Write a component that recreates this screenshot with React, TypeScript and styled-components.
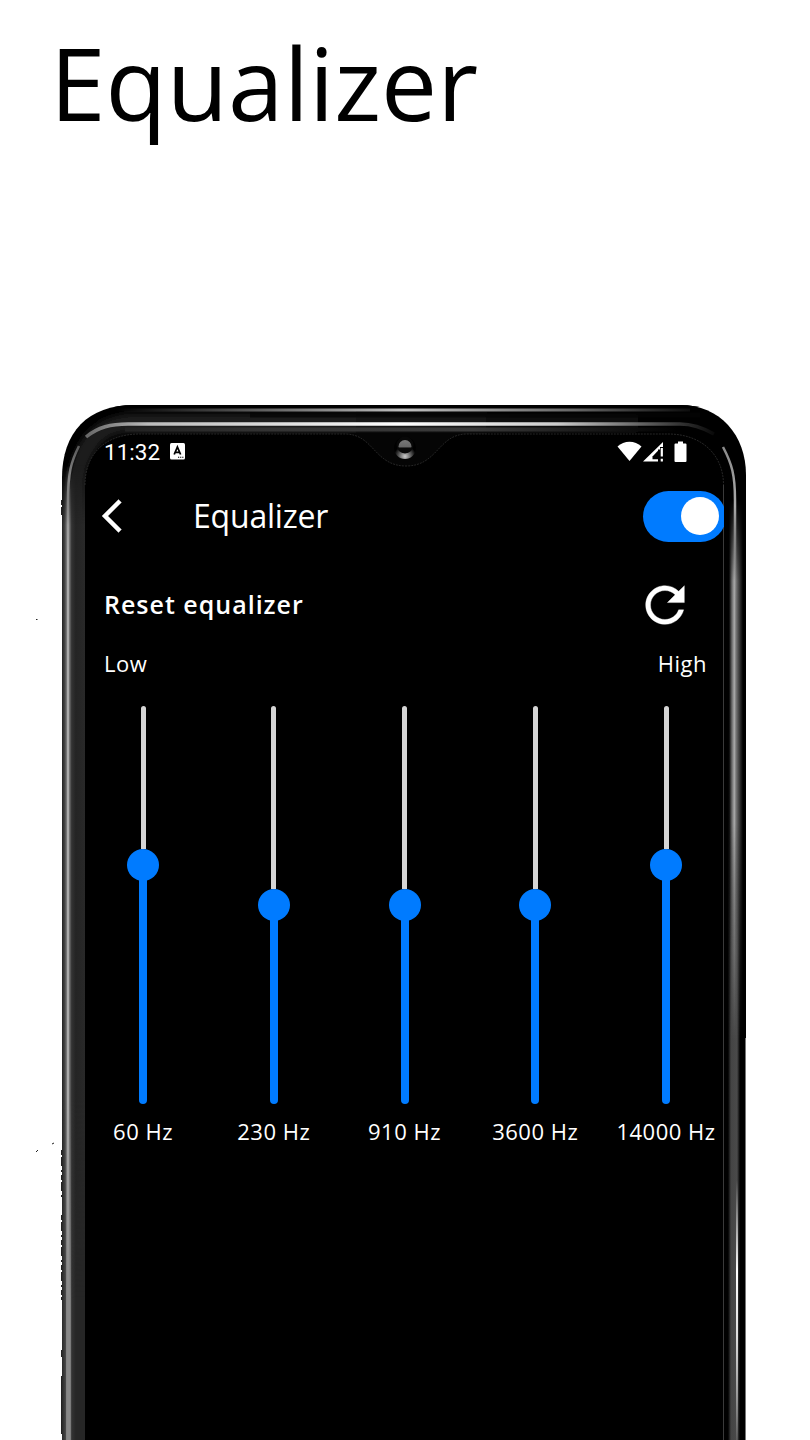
import React from 'react';
import styled, { createGlobalStyle } from 'styled-components';

const GlobalStyle = createGlobalStyle`
  * { box-sizing: border-box; }
  body { margin: 0; background: #fff; }
`;

const Page = styled.main`
  position: relative;
  width: 810px;
  height: 1440px;
  overflow: hidden;
  display: flex;
  flex-direction: column;
  background: #fff;
  font-family: 'Open Sans', 'Noto Sans', sans-serif;
`;

const Hero = styled.header`
  flex: none;
  height: 405px;
  padding: 14px 0 0 50px;
`;

const HeroTitle = styled.h1`
  margin: 0;
  font-size: 100px;
  line-height: 136px;
  font-weight: 400;
  color: #000;
`;

const Phone = styled.section`
  position: relative;
  flex: none;
  width: 684px;
  height: 1035px;
  margin-left: 62px;
  padding: 29px 22px 0 23px;
`;

const FrameArt = styled.svg`
  position: absolute;
  left: -62px;
  top: -5px;
  width: 810px;
  height: 1040px;
`;

const Specks = styled.svg`
  position: absolute;
  left: 0;
  top: 500px;
  width: 70px;
  height: 940px;
`;

const Screen = styled.div`
  position: relative;
  width: 639px;
  height: 1006px;
  overflow: hidden;
  display: flex;
  flex-direction: column;
  color: #fff;
`;

const StatusBar = styled.div`
  flex: none;
  height: 35px;
  padding: 0 37px 0 19px;
  display: flex;
  align-items: center;
`;

const Clock = styled.span`
  font-family: Roboto, sans-serif;
  font-size: 22.5px;
  line-height: 26px;
  width: 66px;
`;

const StatusIcons = styled.div`
  margin-left: auto;
  display: flex;
  align-items: center;
`;

const TopBar = styled.div`
  flex: none;
  height: 94px;
  padding-left: 17px;
  display: flex;
  align-items: center;
`;

const BackButton = styled.button`
  width: 91px;
  height: 40px;
  padding: 0;
  border: 0;
  background: none;
  color: #fff;
  text-align: left;
  svg { display: block; }
`;

const ScreenTitle = styled.h2`
  margin: 0;
  flex: 1;
  font-size: 32px;
  line-height: 44px;
  font-weight: 400;
  letter-spacing: -0.2px;
`;

const Toggle = styled.div`
  flex: none;
  width: 83px;
  height: 51px;
  margin-right: -1.5px;
  padding-right: 6.5px;
  border-radius: 26px;
  background: #007bff;
  display: flex;
  align-items: center;
  justify-content: flex-end;
`;

const ToggleKnob = styled.span`
  width: 38px;
  height: 38px;
  border-radius: 50%;
  background: #fff;
`;

const ResetRow = styled.div`
  flex: none;
  height: 83px;
  padding: 0 30px 0 19px;
  display: flex;
  align-items: center;
  justify-content: space-between;
`;

const ResetLabel = styled.span`
  padding-bottom: 2px;
  font-size: 25px;
  line-height: 34px;
  font-weight: 600;
  letter-spacing: 1px;
`;

const RangeRow = styled.div`
  flex: none;
  height: 34px;
  padding: 0 17px 0 19px;
  display: flex;
  justify-content: space-between;
  align-items: center;
  font-size: 22px;
  line-height: 30px;
  letter-spacing: 0.5px;
`;

const Bands = styled.div`
  flex: none;
  padding: 26px 8px 0 8px;
  display: flex;
  justify-content: space-between;
`;

const Band = styled.div`
  width: 100px;
  display: flex;
  flex-direction: column;
  align-items: center;
`;

const Slider = styled.div`
  height: 398px;
  display: flex;
  flex-direction: column;
  align-items: center;
`;

const EmptyTrack = styled.div<{ $length: number }>`
  width: 5px;
  height: ${(p) => p.$length}px;
  border-radius: 3px 3px 0 0;
  background: #d5d5d5;
`;

const Thumb = styled.div`
  flex: none;
  width: 32px;
  height: 32px;
  border-radius: 50%;
  background: #007bff;
`;

const FilledTrack = styled.div`
  flex: 1;
  width: 8px;
  margin-top: -2px;
  border-radius: 0 0 4px 4px;
  background: #007bff;
`;

const BandLabel = styled.span`
  margin-top: 12px;
  font-size: 22px;
  line-height: 30px;
  letter-spacing: 0.5px;
  white-space: nowrap;
`;

const bands = [
  { label: '60 Hz', empty: 143 },
  { label: '230 Hz', empty: 183 },
  { label: '910 Hz', empty: 183 },
  { label: '3600 Hz', empty: 183 },
  { label: '14000 Hz', empty: 143 },
];

const BODY = 'M62 1440V478C62 432 88 405 134 405H680C720 405 746 435 746 475V1440Z';

function Frame() {
  return (
    <FrameArt viewBox="0 400 810 1040" aria-hidden="true">
      <defs>
        <clipPath id="body"><path d={BODY} /></clipPath>
        <filter id="soft" x="-20%" y="-20%" width="140%" height="140%"><feGaussianBlur stdDeviation="3" /></filter>
        <linearGradient id="leftRail" gradientUnits="userSpaceOnUse" x1="62" y1="0" x2="85" y2="0">
          <stop offset="0" stopColor="#222" />
          <stop offset="0.12" stopColor="#444" />
          <stop offset="0.2" stopColor="#777" />
          <stop offset="0.26" stopColor="#c8c8c8" />
          <stop offset="0.32" stopColor="#777" />
          <stop offset="0.42" stopColor="#333" />
          <stop offset="0.6" stopColor="#242424" />
          <stop offset="1" stopColor="#292929" />
        </linearGradient>
        <linearGradient id="leftRailLow" gradientUnits="userSpaceOnUse" x1="62" y1="0" x2="85" y2="0">
          <stop offset="0" stopColor="#292929" />
          <stop offset="0.15" stopColor="#444" />
          <stop offset="0.2" stopColor="#888" />
          <stop offset="0.36" stopColor="#888" />
          <stop offset="0.42" stopColor="#333" />
          <stop offset="0.6" stopColor="#262626" />
          <stop offset="1" stopColor="#262626" />
        </linearGradient>
        <linearGradient id="fadeDown" x1="0" y1="0" x2="0" y2="1">
          <stop offset="0" stopColor="#000" />
          <stop offset="1" stopColor="#fff" />
        </linearGradient>
        <mask id="railMask" maskUnits="userSpaceOnUse" x="60" y="460" width="30" height="980">
          <rect x="60" y="465" width="30" height="60" fill="url(#fadeDown)" />
          <rect x="60" y="525" width="30" height="915" fill="#fff" />
        </mask>
        <mask id="lowMask" maskUnits="userSpaceOnUse" x="60" y="1100" width="30" height="340">
          <rect x="60" y="1100" width="30" height="200" fill="url(#fadeDown)" />
          <rect x="60" y="1300" width="30" height="140" fill="#fff" />
        </mask>
        <linearGradient id="topShade" gradientUnits="userSpaceOnUse" x1="62" y1="0" x2="746" y2="0">
          <stop offset="0" stopColor="#1f1f1f" />
          <stop offset="0.3" stopColor="#1f1f1f" />
          <stop offset="0.75" stopColor="#0c0c0c" />
          <stop offset="0.95" stopColor="#000" />
        </linearGradient>
        <linearGradient id="topFade" gradientUnits="userSpaceOnUse" x1="62" y1="0" x2="746" y2="0">
          <stop offset="0.08" stopColor="#fff" stopOpacity="0" />
          <stop offset="0.25" stopColor="#fff" stopOpacity="0.3" />
          <stop offset="0.5" stopColor="#fff" stopOpacity="0.75" />
          <stop offset="0.75" stopColor="#fff" stopOpacity="0.4" />
          <stop offset="0.92" stopColor="#fff" stopOpacity="0.05" />
        </linearGradient>
        <linearGradient id="rim" gradientUnits="userSpaceOnUse" x1="85" y1="0" x2="715" y2="0">
          <stop offset="0" stopColor="#666" />
          <stop offset="0.1" stopColor="#bbb" />
          <stop offset="0.5" stopColor="#fff" />
          <stop offset="0.75" stopColor="#ccc" />
          <stop offset="0.88" stopColor="#666" />
          <stop offset="1" stopColor="#080808" />
        </linearGradient>
        <linearGradient id="rimShade" gradientUnits="userSpaceOnUse" x1="62" y1="0" x2="746" y2="0">
          <stop offset="0.1" stopColor="#222" />
          <stop offset="0.3" stopColor="#333" />
          <stop offset="0.6" stopColor="#3a3a3a" />
          <stop offset="0.9" stopColor="#000" />
        </linearGradient>
        <linearGradient id="rightRail" gradientUnits="userSpaceOnUse" x1="729" y1="0" x2="743" y2="0">
          <stop offset="0" stopColor="#000" />
          <stop offset="0.2" stopColor="#666" />
          <stop offset="0.38" stopColor="#aaa" />
          <stop offset="0.5" stopColor="#777" />
          <stop offset="0.7" stopColor="#444" />
          <stop offset="1" stopColor="#000" />
        </linearGradient>
        <linearGradient id="rightRailLow" gradientUnits="userSpaceOnUse" x1="728" y1="0" x2="740" y2="0">
          <stop offset="0" stopColor="#000" />
          <stop offset="0.25" stopColor="#444" />
          <stop offset="0.75" stopColor="#4a4a4a" />
          <stop offset="1" stopColor="#000" />
        </linearGradient>
        <linearGradient id="rightFade" x1="0" y1="0" x2="0" y2="1">
          <stop offset="0" stopColor="#000" />
          <stop offset="0.15" stopColor="#fff" />
          <stop offset="0.6" stopColor="#fff" />
          <stop offset="1" stopColor="#000" />
        </linearGradient>
        <mask id="rightMask" maskUnits="userSpaceOnUse" x="726" y="500" width="20" height="540">
          <rect x="726" y="500" width="20" height="540" fill="url(#rightFade)" />
        </mask>
        <mask id="rightLowMask" maskUnits="userSpaceOnUse" x="726" y="700" width="20" height="740">
          <rect x="726" y="700" width="20" height="250" fill="url(#fadeDown)" />
          <rect x="726" y="950" width="20" height="490" fill="#fff" />
        </mask>
        <linearGradient id="glint" x1="0" y1="0" x2="0" y2="1">
          <stop offset="0" stopColor="#fff" stopOpacity="0" />
          <stop offset="0.35" stopColor="#fff" />
          <stop offset="0.6" stopColor="#ddd" />
          <stop offset="1" stopColor="#fff" stopOpacity="0.1" />
        </linearGradient>
        <linearGradient id="leftCorner" gradientUnits="userSpaceOnUse" x1="0" y1="444" x2="0" y2="560">
          <stop offset="0" stopColor="#555" />
          <stop offset="0.3" stopColor="#888" />
          <stop offset="1" stopColor="#888" stopOpacity="0" />
        </linearGradient>
        <linearGradient id="rightCorner" gradientUnits="userSpaceOnUse" x1="0" y1="444" x2="0" y2="600">
          <stop offset="0" stopColor="#888" />
          <stop offset="0.4" stopColor="#aaa" />
          <stop offset="1" stopColor="#999" stopOpacity="0" />
        </linearGradient>
        <linearGradient id="lens" x1="0" y1="0" x2="0" y2="1">
          <stop offset="0" stopColor="#777" />
          <stop offset="0.55" stopColor="#666" />
          <stop offset="0.6" stopColor="#080808" />
        </linearGradient>
        <radialGradient id="lensGlow" cx="0.5" cy="0.88" r="0.5">
          <stop offset="0" stopColor="#ccc" />
          <stop offset="0.5" stopColor="#666" />
          <stop offset="1" stopColor="#000" />
        </radialGradient>
      </defs>
      <path d={BODY} fill="#000" />
      <g clipPath="url(#body)">
        <path d="M67 1440V500C67 445 92 414 134 414H690V433H125C100 434 85 460 85 490V1440Z" fill="url(#topShade)" filter="url(#soft)" />
        <rect x="62" y="465" width="23" height="975" fill="url(#leftRail)" mask="url(#railMask)" />
        <rect x="62" y="1100" width="23" height="340" fill="url(#leftRailLow)" mask="url(#lowMask)" />
        <path d="M110 405.5H700" stroke="#000" strokeWidth="3" />
        <path d="M110 410H690" stroke="url(#topFade)" strokeWidth="3" />
        <path d="M250 415H700" stroke="#050505" strokeWidth="5" opacity="0.7" />
        <path d="M125 429.5H690" stroke="url(#rimShade)" strokeWidth="4" />
        <path d="M86 437C98 427 111 424 128 424H680C696 424 707 430 714 434" fill="none" stroke="url(#rim)" strokeWidth="3.5" />
        <path d="M79 446C71 462 68 472 68 502V560" fill="none" stroke="url(#leftCorner)" strokeWidth="2.5" />
        <rect x="728" y="700" width="12" height="740" fill="url(#rightRailLow)" mask="url(#rightLowMask)" />
        <rect x="729" y="500" width="14" height="540" fill="url(#rightRail)" mask="url(#rightMask)" />
        <path d="M723 447C732 464 735 475 735 500V600" fill="none" stroke="url(#rightCorner)" strokeWidth="2.5" />
        <rect x="736" y="1180" width="2" height="260" fill="url(#glint)" />
        <rect x="745" y="1038" width="1" height="402" fill="#777" />
      </g>
      <path d="M85 1440V485C85 455 104 434 140 434H668C702 434 724 455 724 485V1440Z" fill="#000" />
      <path d="M345 433C374 434 374 466 406 466C438 466 438 434 467 433Z" fill="#050505" />
      <path d="M85 485C85 455 104 434 140 434H345C374 434 374 466 406 466C438 466 438 434 467 434H668C702 434 723.5 455 723.5 485" fill="none" stroke="#303030" strokeWidth="0.8" strokeDasharray="2 1" />
      <path d="M723.5 485V1440" stroke="#3a3a3a" strokeWidth="1" />
      <circle cx="405" cy="448" r="11" fill="url(#lensGlow)" />
      <circle cx="405" cy="445" r="8.5" fill="#080808" />
      <circle cx="405" cy="446.5" r="6.5" fill="url(#lens)" />
    </FrameArt>
  );
}

export default function App() {
  return (
    <Page>
      <GlobalStyle />
      <Hero>
        <HeroTitle>Equalizer</HeroTitle>
      </Hero>
      <Phone>
        <Frame />
        <Screen>
          <StatusBar>
            <Clock>11:32</Clock>
            <svg width="15" height="17" viewBox="0 0 15 17">
              <rect width="15" height="16.5" rx="1.5" fill="#fff" />
              <path d="M4.2 11.5 7.4 4 10.6 11.5M5.2 9.3h4.4" stroke="#000" strokeWidth="1.8" fill="none" />
              <path d="M8 14.3h6" stroke="#000" strokeWidth="1.1" strokeDasharray="1.2 0.9" />
            </svg>
            <StatusIcons>
              <svg width="70" height="22" viewBox="617 441 70 22">
                <path d="M617.5 446.5C624 440 635 440 641.5 446.5L629.5 461Z" fill="#fff" />
                <path d="M643 461.5 663 442V447H660V449.5H658V461.5Z" fill="#fff" />
                <path d="M652.5 459.2V456.5L658.2 450.5V459.2Z" fill="#000" />
                <path d="M661.8 448V456.5M661.8 458.8V461.5" stroke="#fff" strokeWidth="2.2" />
                <path d="M678 441.5H683V443.5H685.5Q686.5 443.5 686.5 444.5V461Q686.5 462 685.5 462H675.5Q674.5 462 674.5 461V444.5Q674.5 443.5 675.5 443.5H678Z" fill="#fff" />
              </svg>
            </StatusIcons>
          </StatusBar>
          <TopBar>
            <BackButton aria-label="Back">
              <svg width="40" height="40" viewBox="0 0 24 24">
                <path fill="currentColor" stroke="currentColor" strokeWidth="0.2" d="M11.67 3.87 9.9 2.1 0 12l9.9 9.9 1.77-1.77L3.54 12z" />
              </svg>
            </BackButton>
            <ScreenTitle>Equalizer</ScreenTitle>
            <Toggle role="switch" aria-checked="true"><ToggleKnob /></Toggle>
          </TopBar>
          <ResetRow>
            <ResetLabel>Reset equalizer</ResetLabel>
            <svg width="58" height="58" viewBox="0 0 24 24">
              <path fill="#fff" stroke="#fff" strokeWidth="0.15" d="M17.65 6.35C16.2 4.9 14.21 4 12 4c-4.42 0-7.99 3.58-7.99 8s3.57 8 7.99 8c3.73 0 6.84-2.55 7.73-6h-2.08c-.82 2.33-3.04 4-5.65 4-3.31 0-6-2.69-6-6s2.69-6 6-6c1.66 0 3.14.69 4.22 1.78L13 11h7V4l-2.35 2.35z" />
            </svg>
          </ResetRow>
          <RangeRow>
            <span>Low</span>
            <span>High</span>
          </RangeRow>
          <Bands>
            {bands.map((band) => (
              <Band key={band.label}>
                <Slider>
                  <EmptyTrack $length={band.empty} />
                  <Thumb />
                  <FilledTrack />
                </Slider>
                <BandLabel>{band.label}</BandLabel>
              </Band>
            ))}
          </Bands>
        </Screen>
      </Phone>
      <Specks viewBox="0 500 70 940" aria-hidden="true">
        <path d="M36 619.5h1.5M36 1152l2-2M52 1144l2-1" stroke="#222" fill="none" />
        <path d="M61.5 500V515M61.5 1150V1200M61.5 1215V1300" stroke="#222" strokeDasharray="5 2 9 4 2 3" />
        <path d="M61.5 1350V1357M61.5 1376V1434" stroke="#222" />
      </Specks>
    </Page>
  );
}
